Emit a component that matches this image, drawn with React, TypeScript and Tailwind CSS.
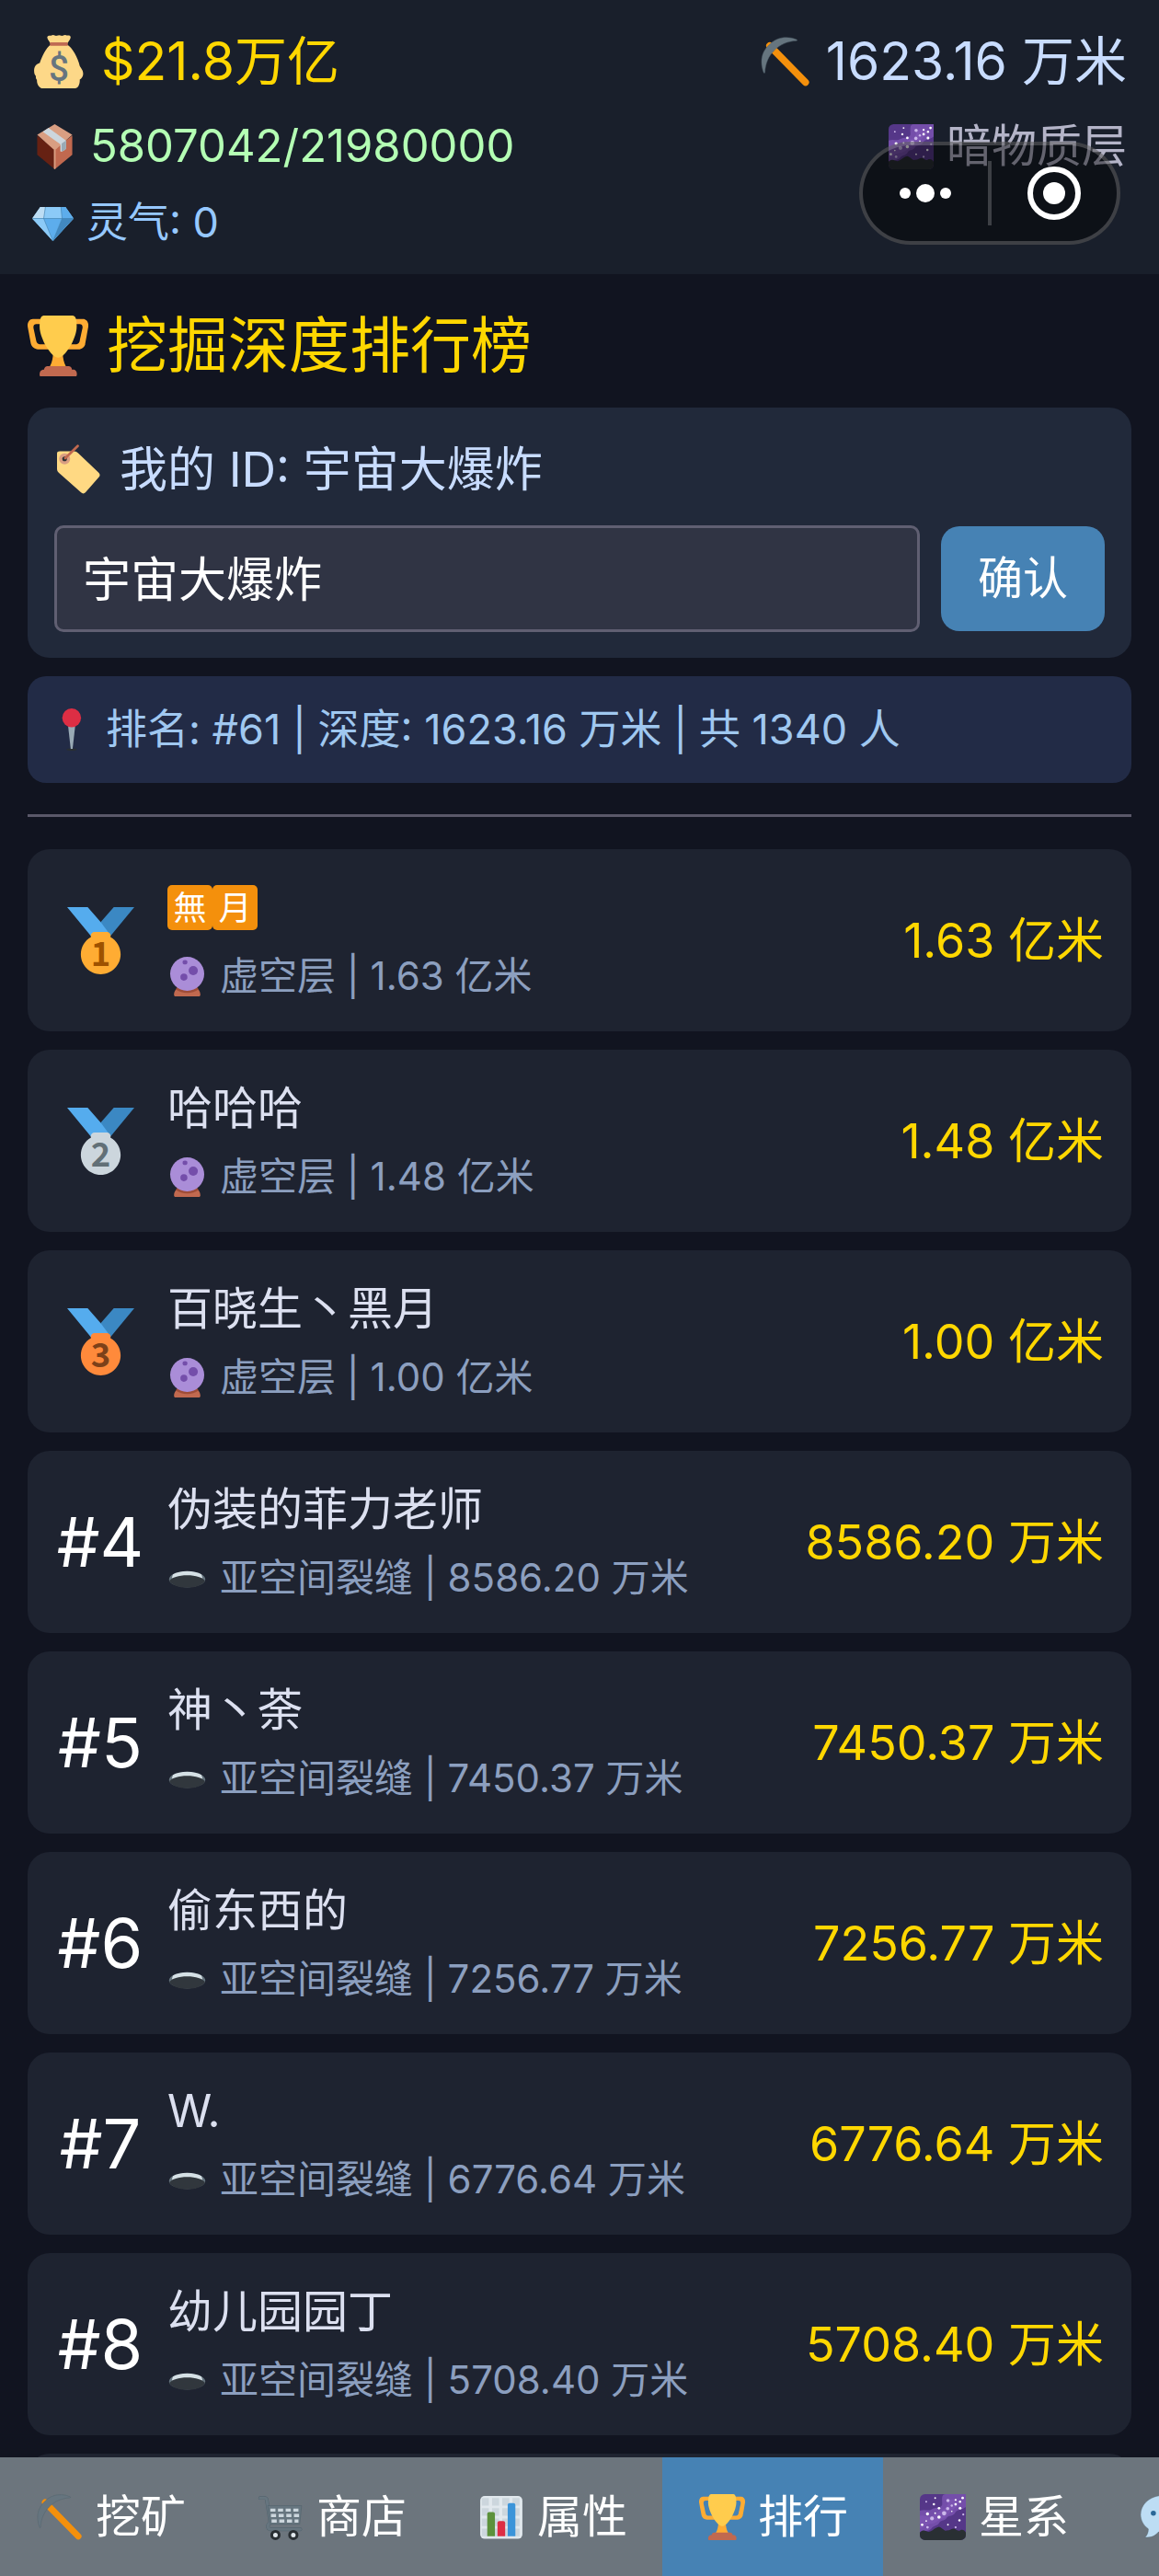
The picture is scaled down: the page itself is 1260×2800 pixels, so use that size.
import { useState } from "react";
import type { ReactNode } from "react";

interface IconProps {
  className?: string;
}

interface Player {
  rank: number;
  name: string;
  layer: string;
  depth: string;
}

const PLAYERS: Player[] = [
  { rank: 1, name: "無月", layer: "虚空层", depth: "1.63 亿米" },
  { rank: 2, name: "哈哈哈", layer: "虚空层", depth: "1.48 亿米" },
  { rank: 3, name: "百晓生丶黑月", layer: "虚空层", depth: "1.00 亿米" },
  { rank: 4, name: "伪装的菲力老师", layer: "亚空间裂缝", depth: "8586.20 万米" },
  { rank: 5, name: "神丶荼", layer: "亚空间裂缝", depth: "7450.37 万米" },
  { rank: 6, name: "偷东西的", layer: "亚空间裂缝", depth: "7256.77 万米" },
  { rank: 7, name: "W.", layer: "亚空间裂缝", depth: "6776.64 万米" },
  { rank: 8, name: "幼儿园园丁", layer: "亚空间裂缝", depth: "5708.40 万米" },
];

function Svg({ className, children }: IconProps & { children: ReactNode }) {
  return (
    <svg viewBox="0 0 36 36" aria-hidden="true" className={`shrink-0 ${className || ""}`}>
      {children}
    </svg>
  );
}

function MoneyBag({ className }: IconProps) {
  return (
    <Svg className={className}>
      <path
        fill="#FDD888"
        d="M12.5 6.5C12.3 4.600 10 3 10.200 1.300 10.800-.2 12.500.8 13.600.2c1.200-.5 1.900.7 3.100.3 1-.5 1.900-.5 2.900 0 1 .4 2-.8 3.100-.3 1.200.5 2.800-.4 3.200 1.100.2 1.700-2.100 3.300-2.300 5.200 3.300 1.800 7.300 8.700 8.500 14.500.6 1.300 2.300 2.600 2.300 5.200 0 1.900-1.100 3.200-2.300 3.900.2 2.900-1.100 5.900-3.100 5.900H7.300c-2.500 0-4.300-2.700-4.100-5.800-.6-.6-.9-1.600-.7-2.400C1.500 26.900 1.200 25 1.300 23.500c.2-3.100 2.400-4.200 3.800-4.600C6.300 15 9.500 8.500 12.500 6.500z"
      />
      <path fill="#BF6952" d="M12 5h12v2.300H12z" />
      <text
        x="18"
        y="31"
        textAnchor="middle"
        fontSize="24"
        fontWeight="500"
        fontFamily="Roboto, sans-serif"
        fill="#67757F"
      >
        $
      </text>
    </Svg>
  );
}

function Pickaxe({ className }: IconProps) {
  return (
    <Svg className={className}>
      <path d="M6.500 6.500 32.500 33" stroke="#F4900C" strokeWidth="5" strokeLinecap="round" />
      <path
        fill="#66757F"
        stroke="#50616b"
        strokeWidth=".3"
        d="M26 2C19-1 11.500.500 7 5-.2 11-.5 19 2.200 26c.3.500.8.4.8-.2C3.400 19.500 5.500 14.200 9.700 10 13.800 5.700 19.600 3.200 25.800 2.900c.6 0 .8-.6.2-.9z"
      />
    </Svg>
  );
}

function Package({ className }: IconProps) {
  return (
    <Svg className={className}>
      <path fill="#662113" d="M4 9v15.500L18 36V20z" />
      <path fill="#C1694F" d="M32 9v15.500L18 36V20z" />
      <path fill="#D99E82" d="M18 0 32 8.500 18 21 4 8.500z" />
      <path fill="#D99E82" d="M17.300 20.500h1.400V35.500l-.7.5-.7-.5z" />
      <path fill="#CCD6DD" d="M13 3 8.500 6 22.500 16v5.500c0 1.300 4.500-.8 4.500-2.200V13z" />
      <path fill="#99AAB5" d="M23.500 15.500 27 13v6.200c0 1.200-3.500 3-3.500 2z" />
    </Svg>
  );
}

function Gem({ className }: IconProps) {
  return (
    <Svg className={className}>
      <path fill="#8CCAF7" d="M7 4h22l7 10-18 19.500L0 14z" />
      <path fill="#BDDDF4" d="M7 4h4.500L10 14H0z" />
      <path fill="#5DADEC" d="M25 4h4l7 10-18 19.500L26 14z" />
      <path fill="#4289C1" d="M26 14h10L18 33.500z" />
      <path fill="#5DADEC" d="M10 14h16l-8 19.500z" />
      <path fill="#8CCAF7" d="M0 14h10l8 19.500z" />
      <path d="M0 14h36M11.500 4 10 14l8 19.500L26 14 25 4" fill="none" stroke="#3f7fae" strokeWidth=".5" />
    </Svg>
  );
}

function Galaxy({ className }: IconProps) {
  const stars = [
    [5, 6, 0.7], [12, 3, 0.7], [11, 8, 0.9], [22, 5, 1.3], [28, 4.5, 0.8], [33.5, 3, 1],
    [25, 9, 0.9], [28, 8, 1], [31.5, 6, 0.9], [21.8, 11.3, 1.3], [15, 11, 1], [31.5, 11, 1.1],
    [19, 15, 1.7], [12, 15, 0.7], [6, 15.5, 1.2], [9.5, 19, 1.5], [15, 18, 1.3], [25, 13.5, 0.6],
    [34, 16, 0.8], [5, 21, 0.6], [1.8, 24, 1], [6, 26, 1], [31, 20.5, 0.9], [22, 24, 0.7], [28, 26, 0.8],
  ];
  return (
    <Svg className={className}>
      <rect width="36" height="36" rx="4" fill="#553788" />
      <path fill="#744EAA" d="M0 13c4-1.500 7 .5 9-1 3-2 8-.5 8.500-4C17.500 5 16.500 0 20 0h16v10c-3 2.500-7 2-8 4-2 4-5 2-7 4.500-1 2.500-4 1.500-5.500 3.500C14 25.500 11 24 9 27c-2 2-6 2-9 3z" />
      <path fill="#9266CC" opacity=".25" d="M0 17c5-1 6 2 10 0s5-4 8-5 4-4 4-6 6-3 8-1-2 6-4 7-4 6-8 7-5 4-9 4-4 3-9 4z" />
      {stars.map(([cx, cy, r], i) => (
        <circle key={i} cx={cx} cy={cy} r={r} fill={i % 3 === 0 ? "#CBB7EA" : "#fff"} />
      ))}
      <path fill="#292F33" d="M0 30c3-3 5-.5 7-.5 3-.5 4-3 8-4 3 1 4 3.500 6 3 3 0 4-2 6-1.500 2 1 3 2.500 5 1 2-.5 3 .5 4 2v2a4 4 0 0 1-4 4H4a4 4 0 0 1-4-4z" />
    </Svg>
  );
}

function Trophy({ className }: IconProps) {
  return (
    <Svg className={className}>
      <path
        fill="#FFAC33"
        d="M5.123 5h6C12.227 5 13 4.896 13 6V4c0-1.104-.773-2-1.877-2h-8c-2 0-3.583 2.125-3 5 0 0 1.791 9.375 1.917 9.958C2.373 18.500 4.164 20 6.081 20h6.958c1.105 0-.039-1.896-.039-3v-2c0 1.104-.773 2-1.877 2h-4c-1.104 0-1.833-1.042-2-2S3.539 7.667 3.539 7.667C3.206 5.750 4.018 5 5.123 5zm25.812 0h-6C23.831 5 22 4.896 22 6V4c0-1.104 1.831-2 2.935-2h8c2 0 3.584 2.125 3 5 0 0-1.633 9.419-1.771 10-.354 1.500-2.042 3-4 3h-7.146C21.914 20 22 18.104 22 17v-2c0 1.104 1.831 2 2.935 2h4c1.104 0 1.834-1.042 2-2s1.584-7.333 1.584-7.333C32.851 5.750 32.040 5 30.935 5zM20.832 22c0-6.958-2.709 0-2.709 0s-3-6.958-3 0-3.291 10-3.291 10h12.292s-3.292-3.042-3.292-10z"
      />
      <path
        fill="#FFCC4D"
        d="M29.123 6.577c0 6.775-6.770 18.423-11 18.423-4.231 0-11-11.649-11-18.423 0-5.577 1-6.577 3-6.577h16c2 0 3 1 3 6.577z"
      />
      <path
        fill="#C1694F"
        d="M27 33c0-1.100.3-1-.7-1 0-1.200-1-2-2-2H11.800c-1 0-2 .8-2 2-1 0-1.700.3-2.200 1-.6.800-.6 3-.1 3h21.300c.6 0 .6-2.200 0-3-.5-.8-1-1-1.800-1z"
      />
    </Svg>
  );
}

function Tag({ className }: IconProps) {
  return (
    <Svg className={className}>
      <path
        fill="#FFD983"
        d="M2 6.500C2 5.500 2.800 5 4 5h10.500c1 0 2 .5 2.800 1.400L32 20.300c1.300 1.200 1.300 2.300.4 3.400l-9.800 11.200c-.9 1-2.200 1-3.200 0L3.200 20.500C2.400 19.700 2 18.800 2 17.800z"
      />
      <circle cx="7.500" cy="10.500" r="4" fill="#D99E82" />
      <circle cx="7.500" cy="10.500" r="1.700" fill="#292F33" />
      <path d="M8 10 17 1.200" stroke="#C1694F" strokeWidth="1.800" strokeLinecap="round" />
    </Svg>
  );
}

function Pin({ className }: IconProps) {
  return (
    <Svg className={className}>
      <ellipse cx="14" cy="35" rx="4.500" ry="1" fill="#292F33" />
      <path fill="#99AAB5" d="M11 15h6l-2.200 19.500h-1.600z" />
      <circle cx="14" cy="8" r="8" fill="#DD2E44" />
    </Svg>
  );
}

function CrystalBall({ className }: IconProps) {
  return (
    <Svg className={className}>
      <path fill="#C1694F" d="M9.500 26h17c.2 3 3.500 4.500 3.500 8.500 0 1-.5 1.500-1.500 1.500h-21C6.500 36 6 35.500 6 34.500c0-4 3.300-5.500 3.500-8.500z" />
      <path fill="#893A29" opacity=".6" d="M7.500 29.500c6 4.500 15 4.500 21 0l-2-2.500h-17z" />
      <circle cx="18" cy="15.500" r="15.500" fill="#AA8DD8" />
      <ellipse cx="16" cy="5" rx="2.200" ry="2" fill="#744EAA" />
      <circle cx="23.500" cy="12.500" r="4.200" fill="#744EAA" />
      <circle cx="15" cy="18.500" r="3.200" fill="#744EAA" />
    </Svg>
  );
}

function Hole({ className }: IconProps) {
  return (
    <Svg className={className}>
      <ellipse cx="18" cy="19" rx="16.500" ry="7.300" fill="#66757F" />
      <path fill="#D5E0E5" d="M5 14.500c6-4 20-4 26 0l1 3.500H4z" />
      <path fill="#31373D" d="M1.800 20C4 17.500 10 15.200 18 15.200S32 17.500 34.200 20c-1 3.500-8 6.500-16.200 6.500S2.800 23.500 1.800 20z" />
    </Svg>
  );
}

const MEDAL_COLORS: Record<number, string[]> = {
  1: ["#FFAC33", "#9E5200"],
  2: ["#CCD6DD", "#627077"],
  3: ["#FF8A3B", "#7C4119"],
};

function Medal({ place, className }: IconProps & { place: number }) {
  const [disc, digit] = MEDAL_COLORS[place];
  return (
    <svg viewBox="0 0 36 36" role="img" aria-label={`第${place}名`} className={className}>
      <path fill="#55ACEE" d="m18 8-7-8H0l14 17 11.521-4.750z" />
      <path fill="#3B88C3" d="m25 0-7 8 5.390 7.312 1.227-1.489L36 0z" />
      <path
        fill={disc}
        d="M23.205 16.026c.08-.217.131-.448.131-.693 0-1.104-.896-2-2-2h-6.667c-1.104 0-2 .896-2 2 0 .245.050.476.131.693-3.258 1.826-5.464 5.307-5.464 9.307C7.335 31.224 12.111 36 18.002 36s10.667-4.776 10.667-10.667c0-4-2.206-7.481-5.464-9.307z"
      />
      <text
        x="18"
        y="31.500"
        textAnchor="middle"
        fontSize="18"
        fontWeight="700"
        fontFamily="'Noto Sans CJK SC', sans-serif"
        fill={digit}
      >
        {place}
      </text>
    </svg>
  );
}

function Cart({ className }: IconProps) {
  return (
    <Svg className={className}>
      <path
        d="M2 3h3.500c1 0 1.500.6 1.700 1.500L10 22.500c-2.500 1-2.800 5 .5 5h23"
        fill="none"
        stroke="#50616b"
        strokeWidth="2.800"
        strokeLinecap="round"
      />
      <path
        d="M2 3h3.500c1 0 1.500.6 1.700 1.500L10 22.500c-2.500 1-2.800 5 .5 5h23"
        fill="none"
        stroke="#66757F"
        strokeWidth="2.200"
        strokeLinecap="round"
      />
      <path fill="#66757F" stroke="#50616b" strokeWidth=".4" d="M8 9h26.500l-1.500 14.500H10z" />
      <path
        d="M10 12.500h23M10.500 16.800h22M11 21h21"
        stroke="#CCD6DD"
        strokeWidth="2.500"
        strokeDasharray="4 2"
      />
      <circle cx="14" cy="32" r="2.900" fill="#E1E8ED" stroke="#292F33" strokeWidth="2.200" />
      <circle cx="28" cy="32" r="2.900" fill="#E1E8ED" stroke="#292F33" strokeWidth="2.200" />
    </Svg>
  );
}

function BarChart({ className }: IconProps) {
  return (
    <Svg className={className}>
      <rect x="1.500" y="1.500" width="33" height="33.500" rx="3.500" fill="#E1E8ED" />
      <path
        d="M5.500 3v30M13.500 3v30M21.500 3v30M29.500 3v30"
        stroke="#CCD6DD"
        strokeWidth="5.500"
        strokeDasharray="6 2"
      />
      <path fill="#5C913B" d="M7 33V15.500a1.500 1.500 0 0 1 1.500-1.500h3a1.500 1.500 0 0 1 1.500 1.500V33z" />
      <path fill="#DD2E44" d="M15 33V22.500a1.500 1.500 0 0 1 1.500-1.500h3a1.500 1.500 0 0 1 1.500 1.500V33z" />
      <path fill="#3B94D9" d="M23 33V8.500A1.500 1.500 0 0 1 24.500 7h3A1.500 1.500 0 0 1 29 8.500V33z" />
    </Svg>
  );
}

function Bubble({ className }: IconProps) {
  return (
    <Svg className={className}>
      <path
        fill="#BDDDF4"
        stroke="#50616b"
        strokeWidth=".3"
        d="M18 1C8 1 0 7.500 0 16c0 4.500 2.300 8.500 6 11.200.2 2.500-.8 4.800-2.500 6.600 5 .5 8.500-1.500 10.500-4.200 1.300.3 2.600.4 4 .4 10 0 18-6.500 18-14.500S28 1 18 1z"
      />
      <circle cx="10" cy="15" r="2" fill="#2A6797" />
      <circle cx="18" cy="15" r="2" fill="#2A6797" />
      <circle cx="26" cy="15" r="2" fill="#2A6797" />
    </Svg>
  );
}

const TABS = [
  { icon: Pickaxe, label: "挖矿" },
  { icon: Cart, label: "商店" },
  { icon: BarChart, label: "属性" },
  { icon: Trophy, label: "排行" },
  { icon: Galaxy, label: "星系" },
  { icon: Bubble, label: "" },
];

// menu capsule that floats over the header
function Capsule() {
  return (
    <div className="absolute top-[154px] right-[42px] flex h-[112px] w-[284px] items-center rounded-full border-4 border-white/20 bg-black/45">
      <button type="button" aria-label="更多" className="flex h-full flex-1 items-center justify-center gap-[6px]">
        <span className="size-3 rounded-full bg-white" />
        <span className="size-5 rounded-full bg-white" />
        <span className="size-3 rounded-full bg-white" />
      </button>
      <span className="h-[70px] w-1 bg-white/20" />
      <button type="button" aria-label="关闭" className="flex h-full flex-1 items-center justify-center">
        <span className="flex size-[58px] items-center justify-center rounded-full border-[6px] border-white">
          <span className="size-6 rounded-full bg-white" />
        </span>
      </button>
    </div>
  );
}

function Header() {
  return (
    <header className="relative flex shrink-0 justify-between bg-[#191f2b] px-[35px] pt-[24px] pb-[22px]">
      <div>
        <div className="flex h-[86px] items-center gap-[17px] text-[57px] text-[#ffd700]">
          <MoneyBag className="size-[58px]" />
          $21.8万亿
        </div>
        <div className="flex h-[98px] items-center gap-[14px] text-[49px] text-[#b4ffb4]">
          <Package className="size-[49px]" />
          5807042/21980000
        </div>
        <div className="flex h-[68px] items-center gap-[14px] text-[45px] text-[#96c8ff]">
          <Gem className="size-[45px]" />
          灵气: 0
        </div>
      </div>
      <div className="flex flex-col items-end">
        <div className="flex h-[86px] items-center gap-[17px] text-[57px] text-[#c8dcff]">
          <Pickaxe className="size-[54px]" />
          1623.16 万米
        </div>
        <div className="flex h-[98px] items-center gap-[14px] text-[49px] text-[#b4b4c8]">
          <Galaxy className="size-[49px]" />
          暗物质层
        </div>
      </div>
      <Capsule />
    </header>
  );
}

function PlayerCard({ player }: { player: Player }) {
  const LayerIcon = player.layer === "虚空层" ? CrystalBall : Hole;

  return (
    <li className="flex h-[198px] shrink-0 items-center gap-[24px] rounded-[24px] bg-[#1e2330] px-[30px]">
      <div className="flex w-[98px] shrink-0 justify-center text-[74px] text-white">
        {player.rank <= 3 ? (
          <Medal place={player.rank} className="size-[73px]" />
        ) : (
          `#${player.rank}`
        )}
      </div>
      <div className="min-w-0 flex-1 pt-[4px]">
        <div className="flex h-[75px] items-center text-[49px] text-[#dce0f0]">
          {player.rank === 1
            ? player.name.split("").map((ch) => (
                <span
                  key={ch}
                  className="flex size-[49px] items-center justify-center rounded-[5px] bg-[#f4900c] text-[36px] leading-none text-white"
                >
                  {ch}
                </span>
              ))
            : player.name}
        </div>
        <div className="flex h-[75px] items-center gap-[14px] text-[42px] text-[#8c9fbf]">
          <LayerIcon className="size-[43px]" />
          {player.layer} | {player.depth}
        </div>
      </div>
      <div className="text-[52px] text-[#ffd700]">{player.depth}</div>
    </li>
  );
}

export default function App() {
  const [draft, setDraft] = useState("宇宙大爆炸");
  const [playerId, setPlayerId] = useState("宇宙大爆炸");
  const [active, setActive] = useState(3);

  return (
    <div className="flex h-screen flex-col overflow-hidden bg-[#111420] font-[Inter,'Noto_Sans_CJK_SC',sans-serif] leading-tight whitespace-nowrap">
      <Header />

      <main className="flex min-h-0 flex-1 flex-col gap-[20px] overflow-hidden px-[30px] pt-[30px]">
        <h1 className="flex h-[95px] shrink-0 items-center gap-[20px] text-[66px] text-[#ffd700]">
          <Trophy className="size-[66px]" />
          挖掘深度排行榜
        </h1>

        <form
          className="shrink-0 rounded-[24px] bg-[#21293a] px-[29px] py-[28px]"
          onSubmit={(e) => {
            e.preventDefault();
            setPlayerId(draft);
          }}
        >
          <label
            htmlFor="player-id"
            className="flex h-[78px] items-center gap-[17px] text-[52px] text-[#c8dcff]"
          >
            <Tag className="size-[54px]" />
            我的 ID: {playerId}
          </label>
          <div className="mt-[22px] flex items-center gap-[23px]">
            <input
              id="player-id"
              type="text"
              value={draft}
              onChange={(e) => setDraft(e.target.value)}
              className="h-[116px] min-w-0 flex-1 rounded-[10px] border-[3px] border-[#605f72] bg-[#303444] px-[28px] pb-[6px] text-[52px] text-white outline-none"
            />
            <button
              type="submit"
              className="h-[114px] w-[178px] rounded-[20px] bg-[#4682b4] text-[49px] text-white"
            >
              确认
            </button>
          </div>
        </form>

        <div className="flex h-[116px] shrink-0 items-center gap-[9px] rounded-[20px] bg-[#222b46] px-[30px] text-[45px] text-[#a0c8f0]">
          <Pin className="size-[46px]" />
          排名: #61 | 深度: 1623.16 万米 | 共 1340 人
        </div>

        <hr className="mt-[14px] mb-[15px] shrink-0 border-t-[3px] border-[#5a5869]" />

        <ul className="flex flex-col gap-[20px]">
          {PLAYERS.map((p) => (
            <PlayerCard key={p.rank} player={p} />
          ))}
          <li className="h-[198px] shrink-0 rounded-[24px] bg-[#1e2330]" />
        </ul>
      </main>

      <nav className="flex h-[129px] shrink-0 overflow-hidden bg-[#6c757d]">
        {TABS.map(({ icon: Icon, label }, i) => (
          <button
            key={i}
            type="button"
            aria-label={label || "聊天"}
            onClick={() => setActive(i)}
            className={`flex w-[240px] shrink-0 items-center gap-[14px] pl-[40px] text-[49px] text-white ${
              active === i ? "bg-[#4682b4]" : ""
            }`}
          >
            <Icon className="size-[50px]" />
            {label}
          </button>
        ))}
      </nav>
    </div>
  );
}
